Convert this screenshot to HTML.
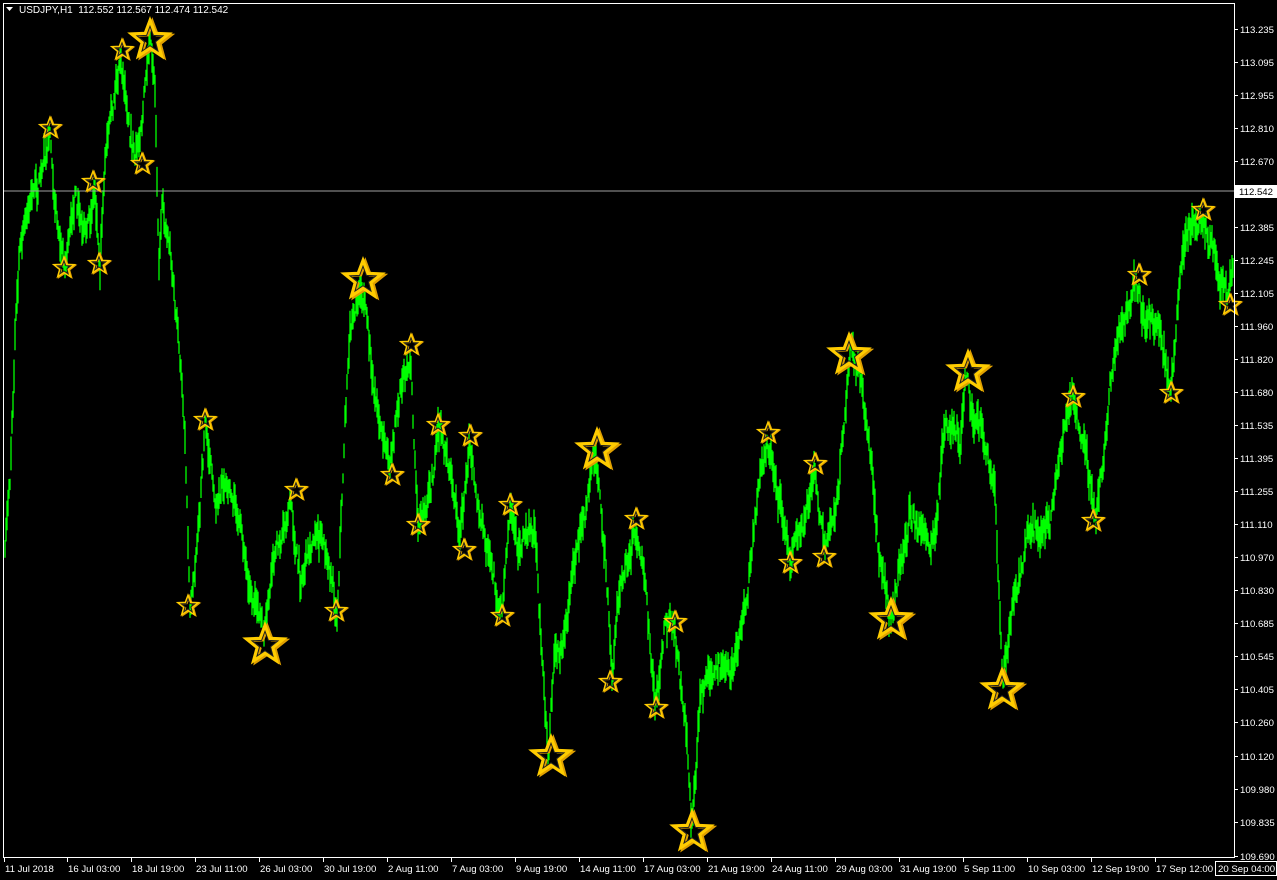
<!DOCTYPE html>
<html><head><meta charset="utf-8"><style>
html,body{margin:0;padding:0;background:#000;width:1277px;height:880px;overflow:hidden}
svg{display:block}
text{font-family:"Liberation Sans",sans-serif;font-size:10px;fill:#fff}
#axis text{font-size:9.6px}
</style></head><body>
<svg id="s" width="1277" height="880" xmlns="http://www.w3.org/2000/svg">
<rect width="1277" height="880" fill="#000"/>
<g id="bars"></g>
<line x1="4" y1="191" x2="1234" y2="191" stroke="#a0a0a0" stroke-width="1"/>
<g id="stars"></g>
<rect x="3.5" y="3.5" width="1231" height="854" fill="none" stroke="#fff" stroke-width="1"/>
<g id="axis"></g>
<path d="M6 7 L13 7 L9.5 11 Z" fill="#fff"/>
<text x="19" y="13" xml:space="preserve">USDJPY,H1  112.552 112.567 112.474 112.542</text>
</svg>
<script>
var NS="http://www.w3.org/2000/svg";
function el(t,a,p){var e=document.createElementNS(NS,t);for(var k in a)e.setAttribute(k,a[k]);(p||document.getElementById('s')).appendChild(e);return e;}
var W=[[5,550],[10,480],[15,330],[20,250],[30,200],[40,180],[50,135],[55,200],[65,265],[75,200],[85,250],[95,185],[100,260],[105,160],[110,110],[120,55],[128,100],[135,160],[140,130],[150,45],[155,100],[159,260],[162,200],[170,240],[178,340],[185,430],[190,600],[200,500],[205,420],[215,500],[230,480],[250,580],[265,640],[275,560],[290,500],[300,580],[315,530],[330,560],[337,610],[345,420],[350,330],[360,290],[365,300],[372,380],[380,420],[390,470],[400,380],[410,350],[418,520],[430,480],[440,430],[450,470],[460,540],[470,440],[480,520],[490,570],[502,610],[510,510],[520,540],[535,530],[548,750],[555,650],[570,600],[580,520],[595,450],[605,550],[612,680],[620,580],[635,530],[645,580],[655,700],[665,620],[675,630],[685,720],[692,830],[700,700],[715,660],[730,680],[740,650],[750,570],[760,480],[768,440],[780,500],[790,560],[800,520],[815,470],[825,550],[835,520],[845,420],[850,360],[860,380],[870,450],[880,560],[890,610],[900,570],[910,520],[920,530],[935,540],[945,430],[960,440],[966,380],[975,420],[985,450],[995,500],[1003,680],[1015,590],[1025,550],[1040,530],[1050,520],[1060,450],[1072,400],[1085,460],[1095,515],[1105,430],[1115,350],[1125,310],[1135,280],[1145,320],[1160,320],[1170,390],[1180,280],[1190,230],[1200,215],[1210,250],[1220,270],[1228,300],[1233,270]];
var seed=7;function r(){seed=(seed*16807)%2147483647;return seed/2147483647;}
var bars=document.getElementById('bars'),d="",wob=0;
for(var x=5;x<=1233;x++){var i=0;while(i<W.length-2&&W[i+1][0]<x)i++;var a=W[i],b=W[i+1];var t=(x-a[0])/(b[0]-a[0]);t=Math.max(0,Math.min(1,t));wob=wob*0.8+(r()-0.5)*14;var y=a[1]+(b[1]-a[1])*t+wob+(r()-0.5)*14;var h=10+r()*26;d+="M"+x+" "+(y-h/2).toFixed(1)+"V"+(y+h/2).toFixed(1);}
el('path',{d:d,stroke:'#00ff00','stroke-width':1.3,fill:'none'},bars);
function star(cx,cy,R){var p=[];for(var k=0;k<10;k++){var rr=k%2?R*0.42:R;var an=-Math.PI/2+k*Math.PI/5;p.push((cx+rr*Math.cos(an)).toFixed(1)+","+(cy+rr*Math.sin(an)).toFixed(1));}return p.join(" ");}
var sg=document.getElementById('stars');
var small=[[50,128],[64,268],[93,182],[99,264],[122,50],[142,164],[188,606],[205,420],[296,490],[336,611],[392,475],[411,345],[418,525],[438,425],[464,550],[470,436],[502,616],[510,505],[610,682],[636,519],[656,708],[675,622],[768,433],[790,563],[815,464],[824,557],[1073,397],[1093,521],[1139,275],[1171,393],[1203,210],[1230,305]];
var big=[[150,40],[363,280],[597,450],[265,645],[551,757],[692,832],[849,355],[891,620],[968,372],[1002,690]];
function draw(c,R,w){el('polygon',{points:star(c[0]+R*0.12,c[1]+R*0.06,R),fill:'none',stroke:'#e0a000','stroke-width':w},sg);el('polygon',{points:star(c[0],c[1],R),fill:'none',stroke:'#ffcc00','stroke-width':w},sg);el('polygon',{points:star(c[0],c[1],R*0.72),fill:'none',stroke:'#202020','stroke-width':1},sg);}
small.forEach(function(c){draw(c,10,2);});
big.forEach(function(c){draw(c,19,3.5);});
var ax=document.getElementById('axis');
var pl=[["113.235",29],["113.095",62],["112.955",95],["112.810",128],["112.670",161],["112.385",227],["112.245",260],["112.105",293],["111.960",326],["111.820",359],["111.680",392],["111.535",425],["111.395",458],["111.255",491],["111.110",524],["110.970",557],["110.830",590],["110.685",623],["110.545",656],["110.405",689],["110.260",722],["110.120",756],["109.980",789],["109.835",822],["109.690",856]];
pl.forEach(function(p){el('line',{x1:1234,x2:1238,y1:p[1]+0.5,y2:p[1]+0.5,stroke:'#fff'},ax);var t=el('text',{x:1240,y:p[1]+4},ax);t.textContent=p[0];});
el('rect',{x:1235,y:185,width:42,height:13,fill:'#fff'},ax);
var tt=el('text',{x:1239,y:195,style:'fill:#000'},ax);tt.textContent="112.542";
var xl=[["11 Jul 2018",4],["16 Jul 03:00",67],["18 Jul 19:00",131],["23 Jul 11:00",195],["26 Jul 03:00",259],["30 Jul 19:00",323],["2 Aug 11:00",387],["7 Aug 03:00",451],["9 Aug 19:00",515],["14 Aug 11:00",579],["17 Aug 03:00",643],["21 Aug 19:00",707],["24 Aug 11:00",771],["29 Aug 03:00",835],["31 Aug 19:00",899],["5 Sep 11:00",963],["10 Sep 03:00",1027],["12 Sep 19:00",1091],["17 Sep 12:00",1155]];
xl.forEach(function(p){el('line',{x1:p[1]+0.5,x2:p[1]+0.5,y1:857,y2:862,stroke:'#fff'},ax);var t=el('text',{x:p[1]+1,y:872},ax);t.textContent=p[0];});
el('rect',{x:1215.5,y:861.5,width:61,height:14,fill:'#000',stroke:'#fff'},ax);
var t2=el('text',{x:1218,y:872},ax);t2.textContent="20 Sep 04:00";
</script>
</body></html>
